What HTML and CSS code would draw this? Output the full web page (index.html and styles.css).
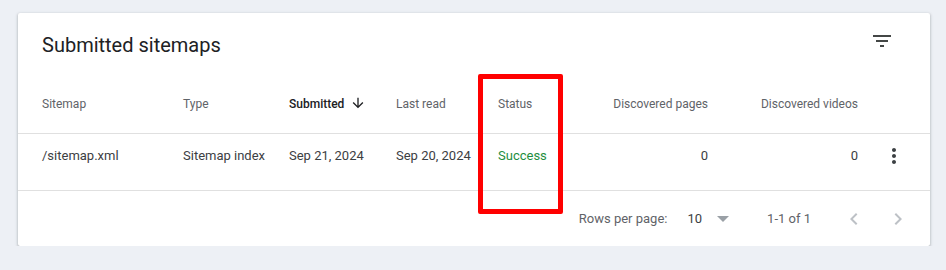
FILE: index.html
```html
<!DOCTYPE html>
<html lang="en">
<head>
    <meta charset="UTF-8">
    <meta name="viewport" content="width=device-width, initial-scale=1.0">
    <title>Submitted sitemaps</title>
    <link rel="stylesheet" href="styles.css">
</head>
<body>
    <div class="page">
        <div class="card">
            <div class="card-head">
                <h1>Submitted sitemaps</h1>
                <svg class="icon" width="24" height="24" viewBox="0 0 24 24"><path d="M10 18h4v-2h-4v2zM3 6v2h18V6H3zm3 7h12v-2H6v2z"/></svg>
            </div>

            <table class="sitemaps">
                <colgroup>
                    <col style="width:165px">
                    <col style="width:106px">
                    <col style="width:107px">
                    <col style="width:102px">
                    <col style="width:90px">
                    <col style="width:120px">
                    <col style="width:150px">
                    <col style="width:72px">
                </colgroup>
                <thead>
                    <tr>
                        <th class="first">Sitemap</th>
                        <th>Type</th>
                        <th class="sorted">Submitted
                            <svg class="sort-arrow" width="16" height="16" viewBox="0 0 24 24"><path d="M20 12l-1.41-1.41L13 16.17V4h-2v12.17l-5.58-5.59L4 12l8 8 8-8z"/></svg>
                        </th>
                        <th>Last read</th>
                        <th>Status</th>
                        <th class="num">Discovered pages</th>
                        <th class="num">Discovered videos</th>
                        <th></th>
                    </tr>
                </thead>
                <tbody>
                    <tr>
                        <td class="first">/sitemap.xml</td>
                        <td>Sitemap index</td>
                        <td>Sep 21, 2024</td>
                        <td>Sep 20, 2024</td>
                        <td class="success">Success</td>
                        <td class="num">0</td>
                        <td class="num">0</td>
                        <td class="actions">
                            <svg class="more" width="24" height="24" viewBox="0 0 24 24"><path d="M12 8c1.1 0 2-.9 2-2s-.9-2-2-2-2 .9-2 2 .9 2 2 2zm0 2c-1.1 0-2 .9-2 2s.9 2 2 2 2-.9 2-2-.9-2-2-2zm0 6c-1.1 0-2 .9-2 2s.9 2 2 2 2-.9 2-2-.9-2-2-2z"/></svg>
                        </td>
                    </tr>
                </tbody>
            </table>

            <div class="pager">
                <span class="rows-label">Rows per page:</span>
                <span class="rows-value">10</span>
                <svg class="drop" width="12" height="6" viewBox="0 0 12 6"><path d="M0 0h12L6 6z"/></svg>
                <span class="range">1-1 of 1</span>
                <svg class="chev first-chev" width="24" height="24" viewBox="0 0 24 24"><path d="M15.41 7.41L14 6l-6 6 6 6 1.41-1.41L10.83 12z"/></svg>
                <svg class="chev" width="24" height="24" viewBox="0 0 24 24"><path d="M10 6L8.59 7.41 13.17 12l-4.58 4.59L10 18l6-6z"/></svg>
            </div>

            <!-- highlight drawn over the Status column -->
            <div class="highlight"></div>
        </div>
    </div>
</body>
</html>
```

FILE: styles.css
```css
body {
    margin: 0;
    font-family: Roboto, "Liberation Sans", Arial, sans-serif;
    background-color: #edf0f5;
    color: #3c4043;
}
.page {
    padding: 13px 16px 0 18px;
}
.card {
    position: relative;
    width: 912px;
    height: 233px;
    background: #fff;
    border-radius: 2px;
    box-shadow: 0 1px 2px rgba(60,64,67,0.3), 0 1px 3px 1px rgba(60,64,67,0.12);
}
.card-head {
    display: flex;
    justify-content: space-between;
    align-items: flex-start;
    height: 63px;
    box-sizing: border-box;
    padding: 16px 36px 0 24px;
}
.card-head h1 {
    margin: 2px 0 0;
    font-size: 20px;
    font-weight: 400;
    line-height: 28px;
    color: #202124;
}
.icon {
    fill: #444746;
}
.sitemaps {
    width: 100%;
    table-layout: fixed;
    border-collapse: collapse;
}
.sitemaps th {
    font-size: 12px;
    font-weight: 400;
    line-height: 20px;
    color: #5f6368;
    text-align: left;
    padding: 18px 0 19px;
    border-bottom: 1px solid #e0e0e0;
    white-space: nowrap;
}
.sitemaps th.sorted {
    color: #202124;
    font-weight: 500;
}
.sort-arrow {
    vertical-align: -3px;
    margin-left: 3px;
    fill: #202124;
}
.sitemaps td {
    font-size: 13px;
    line-height: 20px;
    color: #3c4043;
    padding: 12px 0 24px;
    vertical-align: top;
    border-bottom: 1px solid #e0e0e0;
    white-space: nowrap;
}
.sitemaps .first {
    padding-left: 24px;
}
.sitemaps .num {
    text-align: right;
}
.sitemaps td.success {
    color: #1e8e3e;
}
.sitemaps td.actions {
    padding-top: 10px;
    padding-bottom: 0;
    text-align: center;
}
.more {
    display: inline-block;
    fill: #3c4043;
}
.pager {
    display: flex;
    justify-content: flex-end;
    align-items: center;
    height: 55px;
    padding-right: 20px;
    font-size: 13px;
    color: #5f6368;
}
.rows-value {
    margin-left: 20px;
    color: #3c4043;
}
.drop {
    margin-left: 15px;
    fill: #9aa0a6;
}
.range {
    margin-left: 38px;
}
.chev {
    margin-left: 20px;
    fill: #bdc1c6;
}
.chev.first-chev {
    margin-left: 31px;
}
.highlight {
    position: absolute;
    left: 460px;
    top: 61px;
    width: 75px;
    height: 130px;
    border: 5px solid #ff0000;
    border-radius: 2px;
}
```
